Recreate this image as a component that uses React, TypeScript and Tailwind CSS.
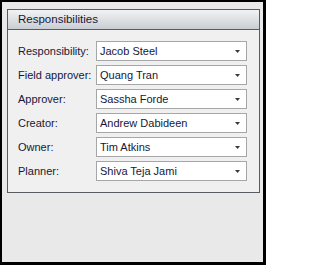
import React from "react";

const rows: [string, string][] = [
  ["Responsibility:", "Jacob Steel"],
  ["Field approver:", "Quang Tran"],
  ["Approver:", "Sassha Forde"],
  ["Creator:", "Andrew Dabideen"],
  ["Owner:", "Tim Atkins"],
  ["Planner:", "Shiva Teja Jami"],
];

export default function App() {
  return (
    <div
      className="w-[266px] h-[265px] bg-black pl-[2px] pt-[2px] pr-[3px] pb-[3px]"
      style={{ fontFamily: '"Liberation Sans", Arial, sans-serif' }}
    >
      <div className="w-full h-full bg-[#e9e9e9] pl-[5px] pt-[7px] pr-[1px]">
        <div className="w-[253px] h-[184px] border border-[#575c63] bg-[#f0f0f0] flex flex-col">
          <div className="h-[20px] border-b border-[#575c63] bg-gradient-to-b from-[#f3f3f4] to-[#c9ced3] flex items-center pl-[10px] text-[11.5px] text-[#15183a]">
            Responsibilities
          </div>
          <div className="flex flex-col gap-[4px] pt-[11px] pl-[10px]">
            {rows.map(([label, value]) => (
              <div key={label} className="flex items-center h-[20px]">
                <div className="w-[78px] text-[11px] text-[#15183a] leading-none">{label}</div>
                <div className="w-[151px] h-[20px] border border-[#a4a6a8] bg-white flex items-center pl-[3px] pr-[6px]">
                  <span className="flex-1 text-[11px] text-[#15183a] leading-none">{value}</span>
                  <svg width="5" height="3" viewBox="0 0 5 3">
                    <polygon points="0,0 5,0 2.5,3" fill="#3a3a3a" />
                  </svg>
                </div>
              </div>
            ))}
          </div>
        </div>
      </div>
    </div>
  );
}
